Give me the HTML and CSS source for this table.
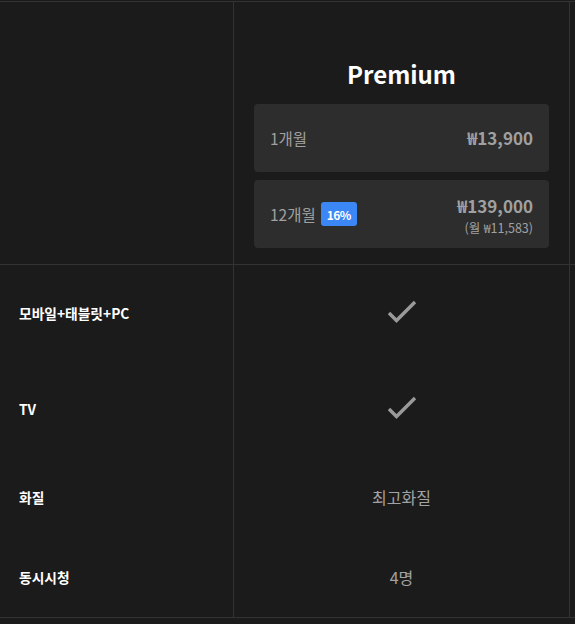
FILE: index.html
```html
<!DOCTYPE html>
<html lang="ko">
<head>
<meta charset="utf-8">
<link rel="stylesheet" href="styles.css">
</head>
<body>
<div class="table">
  <div class="cell head label-col"></div>
  <div class="cell head plan-col">
    <h2 class="plan-title">Premium</h2>
    <div class="option">
      <span class="period">1개월</span>
      <div class="price-box"><span class="price">₩13,900</span></div>
    </div>
    <div class="option">
      <span class="period">12개월 <span class="badge">16%</span></span>
      <div class="price-box annual">
        <span class="price">₩139,000</span>
        <span class="sub">(월 ₩11,583)</span>
      </div>
    </div>
  </div>
  <div class="cell head extra-col"></div>

  <div class="cell tall label-col"><span class="label">모바일+태블릿+PC</span></div>
  <div class="cell tall plan-col center">
    <svg class="check" width="32" height="32" viewBox="0 0 32 32"><path d="M3 16 L10.5 23.5 L29 5" fill="none" stroke="#9a9a9a" stroke-width="3.4"/></svg>
  </div>
  <div class="cell tall extra-col"></div>

  <div class="cell tall label-col"><span class="label">TV</span></div>
  <div class="cell tall plan-col center">
    <svg class="check" width="32" height="32" viewBox="0 0 32 32"><path d="M3 16 L10.5 23.5 L29 5" fill="none" stroke="#9a9a9a" stroke-width="3.4"/></svg>
  </div>
  <div class="cell tall extra-col"></div>

  <div class="cell short label-col"><span class="label">화질</span></div>
  <div class="cell short plan-col center"><span class="value">최고화질</span></div>
  <div class="cell short extra-col"></div>

  <div class="cell short last label-col"><span class="label">동시시청</span></div>
  <div class="cell short last plan-col center"><span class="value">4명</span></div>
  <div class="cell short last extra-col"></div>
</div>
</body>
</html>
```

FILE: styles.css
```css
html, body {
  margin: 0;
  padding: 0;
  background: #1b1b1b;
  font-family: "Noto Sans CJK KR", "Noto Sans", sans-serif;
  overflow: hidden;
}

.table {
  margin-top: 1px;
  border-top: 1px solid #333;
  display: grid;
  grid-template-columns: 234px 336px 1fr;
}

.cell {
  box-sizing: border-box;
  display: flex;
  align-items: center;
}

.label-col,
.plan-col {
  border-right: 1px solid #333;
}

.head {
  height: 263px;
  border-bottom: 1px solid #333;
}

.plan-col.head {
  flex-direction: column;
  align-items: stretch;
  justify-content: flex-end;
  padding: 0 20px 16px 20px;
  gap: 8px;
}

.plan-title {
  margin: 0 0 4px;
  text-align: center;
  color: #fff;
  font-size: 24px;
  font-weight: 700;
  line-height: 36px;
}

.option {
  height: 68px;
  background: #2d2d2d;
  border-radius: 4px;
  display: flex;
  align-items: center;
  justify-content: space-between;
  padding: 0 16px;
}

.period {
  color: #a0a0a0;
  font-size: 15.5px;
  display: flex;
  align-items: center;
  gap: 5px;
}

.badge {
  background: #3b87f5;
  color: #fff;
  font-size: 12px;
  font-weight: 700;
  border-radius: 3px;
  width: 36px;
  height: 24px;
  display: inline-flex;
  align-items: center;
  justify-content: center;
  letter-spacing: -0.5px;
}

.price-box {
  display: flex;
  flex-direction: column;
  align-items: flex-end;
}

.price-box.annual {
  padding-top: 4px;
}

.price {
  color: #a0a0a0;
  font-size: 17px;
  font-weight: 700;
  line-height: 22px;
}

.annual .sub {
  margin-top: 2px;
}

.sub {
  color: #a0a0a0;
  font-size: 12.5px;
  line-height: 18px;
}

.tall {
  height: 96px;
}

.short {
  height: 80px;
}

.last {
  height: 81px;
  border-bottom: 1px solid #333;
}

.label-col {
  padding-left: 19px;
}

.label {
  color: #fff;
  font-size: 13.75px;
  font-weight: 700;
}

.center {
  justify-content: center;
}

.value {
  color: #a3a3a3;
  font-size: 16px;
}
```
